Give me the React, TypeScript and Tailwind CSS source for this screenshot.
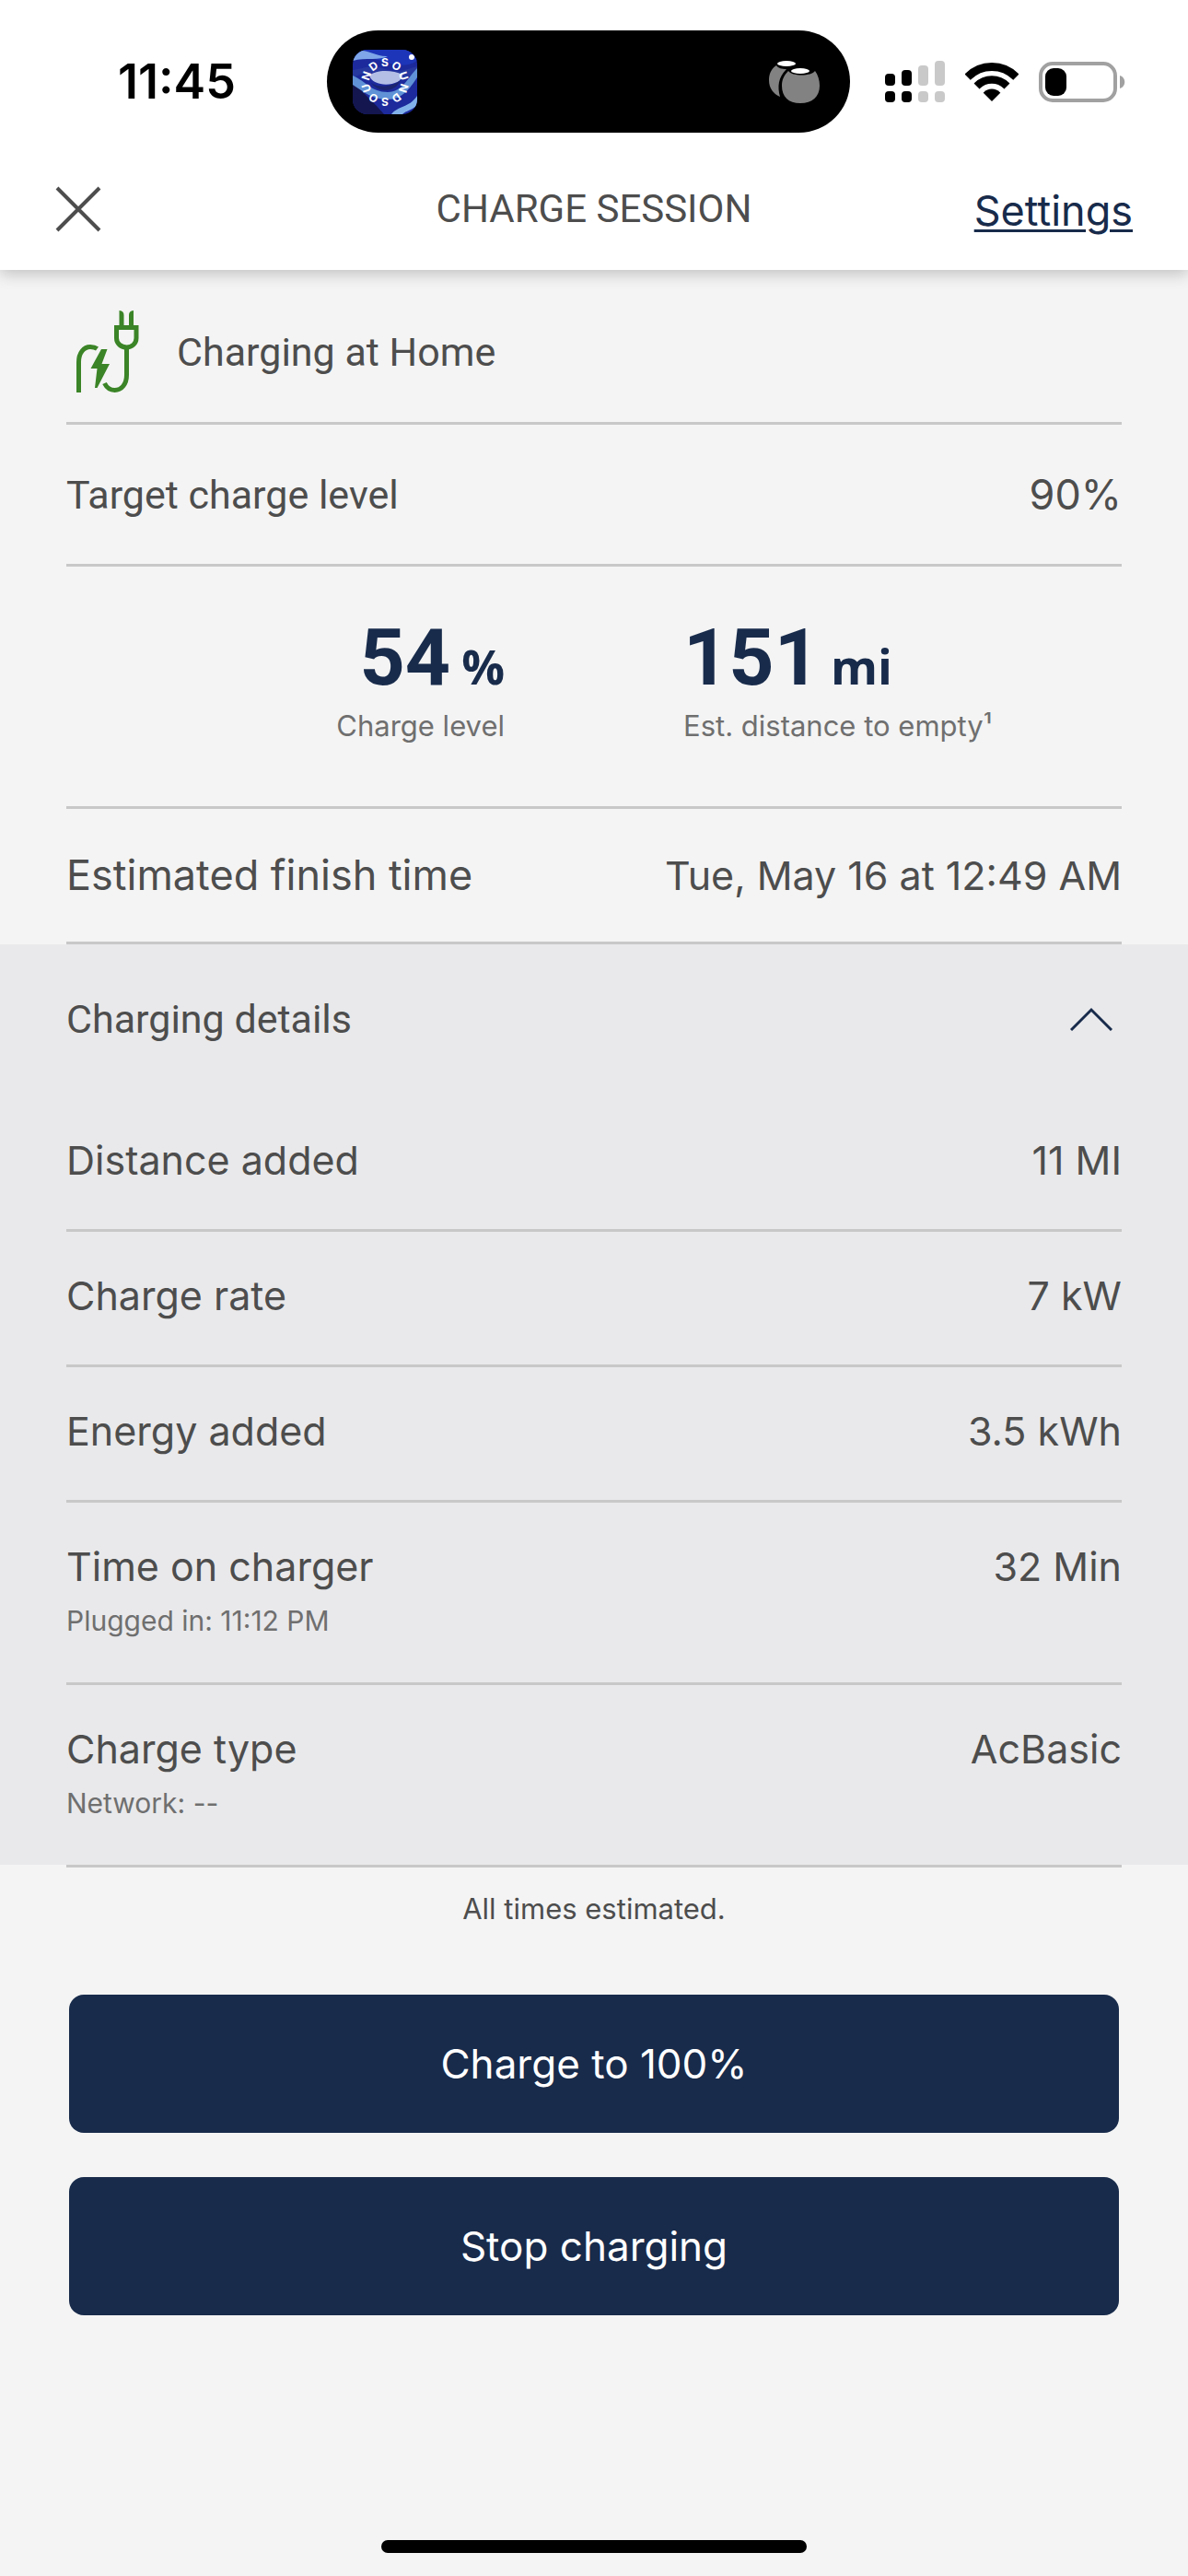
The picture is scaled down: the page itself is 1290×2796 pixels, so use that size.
import { useState } from 'react';
import type { ReactNode } from 'react';

type Detail = { label: string; value: string; note?: string };

const DETAILS: Detail[] = [
  { label: 'Distance added', value: '11 MI' },
  { label: 'Charge rate', value: '7 kW' },
  { label: 'Energy added', value: '3.5 kWh' },
  { label: 'Time on charger', value: '32 Min', note: 'Plugged in: 11:12 PM' },
  { label: 'Charge type', value: 'AcBasic', note: 'Network: --' },
];

const RING = 'SOUNDSOUND'.split('');

function NowPlayingArt() {
  return (
    <svg viewBox="0 0 70 70" className="w-[70px] h-[70px] rounded-2xl" aria-hidden="true">
      <rect width="70" height="70" fill="#1c2a9c" />
      <path d="M0 34 L0 70 L34 70 C24 58 14 50 0 34Z" fill="#14164f" />
      <path d="M0 0 L70 0 L70 12 C54 22 40 14 24 10 C14 8 6 6 0 10Z" fill="#1d35b8" />
      <path d="M4 2 C16 -2 24 8 38 7 C30 12 14 8 0 12Z" fill="#7ea6e8" />
      <path d="M0 22 C14 20 20 16 32 20 C48 26 56 22 70 18 L70 30 C54 28 40 32 22 26 C12 24 6 28 0 30Z" fill="#27389f" />
      <path d="M0 28 C14 34 20 46 38 46 C54 46 60 30 70 20 L70 30 C62 42 54 54 38 54 C20 54 10 44 0 38Z" fill="#5f92d6" />
      <path d="M18 28 C26 21 44 22 54 27 C54 40 22 42 18 28Z" fill="#b4bfe6" />
      <path d="M20 36 C28 42 44 40 52 33 C46 47 28 47 20 36Z" fill="#1b2570" />
      <path d="M42 70 C50 60 60 64 70 50 L70 60 C64 66 58 66 54 70Z" fill="#82b2ea" />
      <circle cx="64" cy="8" r="3" fill="#fff" />
      <g fill="#fff" fontFamily="Inter, sans-serif" fontSize="12" fontWeight="700" textAnchor="middle">
        {RING.map((letter, i) => (
          <text key={i} x="35" y="18" transform={`rotate(${i * 36} 35 35)`}>{letter}</text>
        ))}
      </g>
    </svg>
  );
}

function BudsIcon() {
  return (
    <svg viewBox="0 0 56 46" className="w-[56px] h-[46px]" aria-hidden="true">
      <path d="M8 5 C2 9 0 15 0 21 C0 30 5 36 12 39 C9 28 10 18 19 9 C14 9 10 8 8 5Z" fill="#828282" />
      <ellipse cx="19" cy="3" rx="10" ry="3" fill="#fff" />
      <path d="M21 11 C16 16 14 21 14 27 C14 39 21 46 34 46 C47 46 55 39 55 27 C55 21 53 15 50 11 C46 17 25 17 21 11Z" fill="#828282" />
      <ellipse cx="34" cy="11" rx="10" ry="3" fill="#fff" />
    </svg>
  );
}

function SignalIcon() {
  return (
    <svg viewBox="0 0 65 46" className="w-[65px] h-[46px]" aria-hidden="true">
      <g fill="#000">
        <rect x="0" y="14" width="11" height="13" rx="4" />
        <rect x="18" y="10" width="11" height="17" rx="4" />
        <rect x="0" y="33" width="11" height="12" rx="4" />
        <rect x="18" y="33" width="11" height="12" rx="4" />
      </g>
      <g fill="#c9c9c9">
        <rect x="36" y="5" width="11" height="22" rx="4" />
        <rect x="54" y="0" width="11" height="27" rx="4" />
        <rect x="36" y="33" width="11" height="12" rx="4" />
        <rect x="54" y="33" width="11" height="12" rx="4" />
      </g>
    </svg>
  );
}

function WifiIcon() {
  return (
    <svg viewBox="0 0 58 42" className="w-[58px] h-[42px]" aria-hidden="true">
      <clipPath id="wifi-wedge">
        <path d="M29 42 L-14 -1 H72Z" />
      </clipPath>
      <g clipPath="url(#wifi-wedge)">
        <circle cx="29" cy="41" r="36.5" fill="none" stroke="#000" strokeWidth="9" />
        <circle cx="29" cy="41" r="22.5" fill="none" stroke="#000" strokeWidth="8.5" />
        <circle cx="29" cy="41" r="12.5" fill="#000" />
      </g>
    </svg>
  );
}

function BatteryIcon() {
  return (
    <svg viewBox="0 0 94 44" className="w-[94px] h-[44px]" aria-hidden="true">
      <rect x="2" y="2" width="81" height="40" rx="13" fill="none" stroke="#a1a1a1" strokeWidth="4" />
      <rect x="7" y="7" width="23" height="30" rx="9" fill="#000" />
      <path d="M88 15 C95 17 95 27 88 29Z" fill="#a1a1a1" />
    </svg>
  );
}

function PlugIcon() {
  return (
    <svg viewBox="0 0 69 90" className="w-[69px] h-[90px]" aria-hidden="true">
      <g fill="none" stroke="#3b8427" strokeWidth="5">
        <path d="M2.5 89 V56 C2.5 46 8 39.5 15 39.5 C18 39.5 20.5 40 22.5 41.5" />
        <path d="M43.5 18.5 H65 V30 C65 36 60 40 54.5 40 C48.5 40 43.5 36 43.5 30Z" />
        <path d="M54.5 40 V70 C54.5 80 49 86.5 41.5 86.5 C36.5 86.5 33 84 30.5 79" />
      </g>
      <path d="M46.5 0 C50 0.5 51.5 2 51.5 5 V18 H46.5Z M62 0 C58.5 0.5 57 2 57 5 V18 H62Z" fill="#3b8427" />
      <path d="M27 42 H33.5 L27.5 58 H36 L22.5 84 H20 L22.5 63 H15.5Z" fill="#3b8427" />
    </svg>
  );
}

function StatusBar() {
  return (
    <div className="grid grid-cols-[355fr_568px_367fr] items-center pt-[33px]">
      <span className="pl-[128px] font-[Inter] text-[52px] leading-none font-semibold text-black">11:45</span>
      <div className="flex h-[111px] items-center justify-between rounded-full bg-black pr-8 pl-7">
        <NowPlayingArt />
        <BudsIcon />
      </div>
      <div className="flex items-center gap-[22px] pl-[38px]">
        <SignalIcon />
        <WifiIcon />
        <BatteryIcon />
      </div>
    </div>
  );
}

function Row({ children }: { children: ReactNode }) {
  return <div className="flex items-center justify-between border-b-3 border-[#c8c8c8]">{children}</div>;
}

function Stat({ value, unit, label }: { value: string; unit: string; label: ReactNode }) {
  return (
    <div>
      <p className="font-[Roboto] text-[86px] leading-[84px] font-bold text-[#182b4b]">
        {value}
        <span className="ml-3 font-['Open_Sans'] text-[52px] leading-none">{unit}</span>
      </p>
      <p className="mt-3 text-[31px] leading-10 text-[#6f6f6f]">{label}</p>
    </div>
  );
}

export default function App() {
  const [open, setOpen] = useState(true);

  return (
    <div className="flex min-h-screen flex-col bg-[#f4f4f4] font-[Inter,sans-serif] text-[43px] leading-[54px] text-[#4d4d4d]">
      <header className="relative bg-white shadow-[0_4px_16px_rgba(0,0,0,0.22)]">
        <StatusBar />
        <div className="grid h-[149px] grid-cols-[1fr_auto_1fr] items-center px-[60px] pt-[16px]">
          <button type="button" aria-label="Close" className="justify-self-start">
            <svg viewBox="0 0 50 50" className="w-[50px] h-[50px]" fill="none" stroke="#4d4d4d" strokeWidth="4">
              <path d="M2 2 L48 48 M48 2 L2 48" />
            </svg>
          </button>
          <h1 className="font-[Roboto] text-[42px]">CHARGE SESSION</h1>
          <a href="#settings" className="justify-self-end pt-1 text-[45px] text-[#182b4b] underline decoration-3 underline-offset-4">
            Settings
          </a>
        </div>
      </header>

      <main>
        <section className="px-[72px]">
          <Row>
            <h2 className="flex h-[165px] items-center gap-10 pt-3 pl-[11px] font-[Roboto] text-[43px]">
              <PlugIcon />
              Charging at Home
            </h2>
          </Row>
          <Row>
            <span className="pt-[49px] pb-12 font-[Roboto] text-[43px]">Target charge level</span>
            <span className="text-[45px]">90%</span>
          </Row>
          <div className="grid h-[263px] grid-cols-2 gap-[194px] border-b-3 border-[#c8c8c8] pt-[57px]">
            <div className="justify-self-end text-right">
              <Stat value="54" unit="%" label="Charge level" />
            </div>
            <Stat value="151" unit="mi" label="Est. distance to empty¹" />
          </div>
          <Row>
            <span className="py-[45px] text-[45px]">Estimated finish time</span>
            <span>Tue, May 16 at 12:49 AM</span>
          </Row>
        </section>

        <section className="bg-[#e9e9eb]">
          <button
            type="button"
            aria-expanded={open}
            onClick={() => setOpen(!open)}
            className="flex h-[165px] w-full items-center justify-between pr-[82px] pb-1 pl-[72px] font-[Roboto] text-[43px]"
          >
            Charging details
            <svg viewBox="0 0 46 26" className={open ? 'w-[46px] h-[26px]' : 'w-[46px] h-[26px] rotate-180'} fill="none" stroke="#182b4b" strokeWidth="3">
              <path d="M1 25 L23 3 L45 25" />
            </svg>
          </button>
          {open && (
            <dl className="px-[72px]">
              {DETAILS.map((d) => (
                <div key={d.label} className="flex justify-between border-b-3 border-[#c8c8c8] pt-[42px] pb-12 last:border-b-0">
                  <dt>
                    {d.label}
                    {d.note && <span className="mt-[11px] block pt-0.5 text-[30px] leading-[38px] text-[#6f6f6f]">{d.note}</span>}
                  </dt>
                  <dd>{d.value}</dd>
                </div>
              ))}
            </dl>
          )}
        </section>
        <hr className="mx-[72px] border-t-3 border-[#c8c8c8]" />

        <p className="pt-[25px] text-center text-[31px] leading-10">All times estimated.</p>
        <div className="mt-[73px] flex flex-col gap-12 px-[75px] text-[44px] text-white">
          <button type="button" className="h-[150px] rounded-2xl bg-[#182b4b]">Charge to 100%</button>
          <button type="button" className="h-[150px] rounded-2xl bg-[#182b4b]">Stop charging</button>
        </div>
      </main>

      <div className="mx-auto mt-auto mb-[25px] h-[14px] w-[462px] rounded-full bg-black" />
    </div>
  );
}
